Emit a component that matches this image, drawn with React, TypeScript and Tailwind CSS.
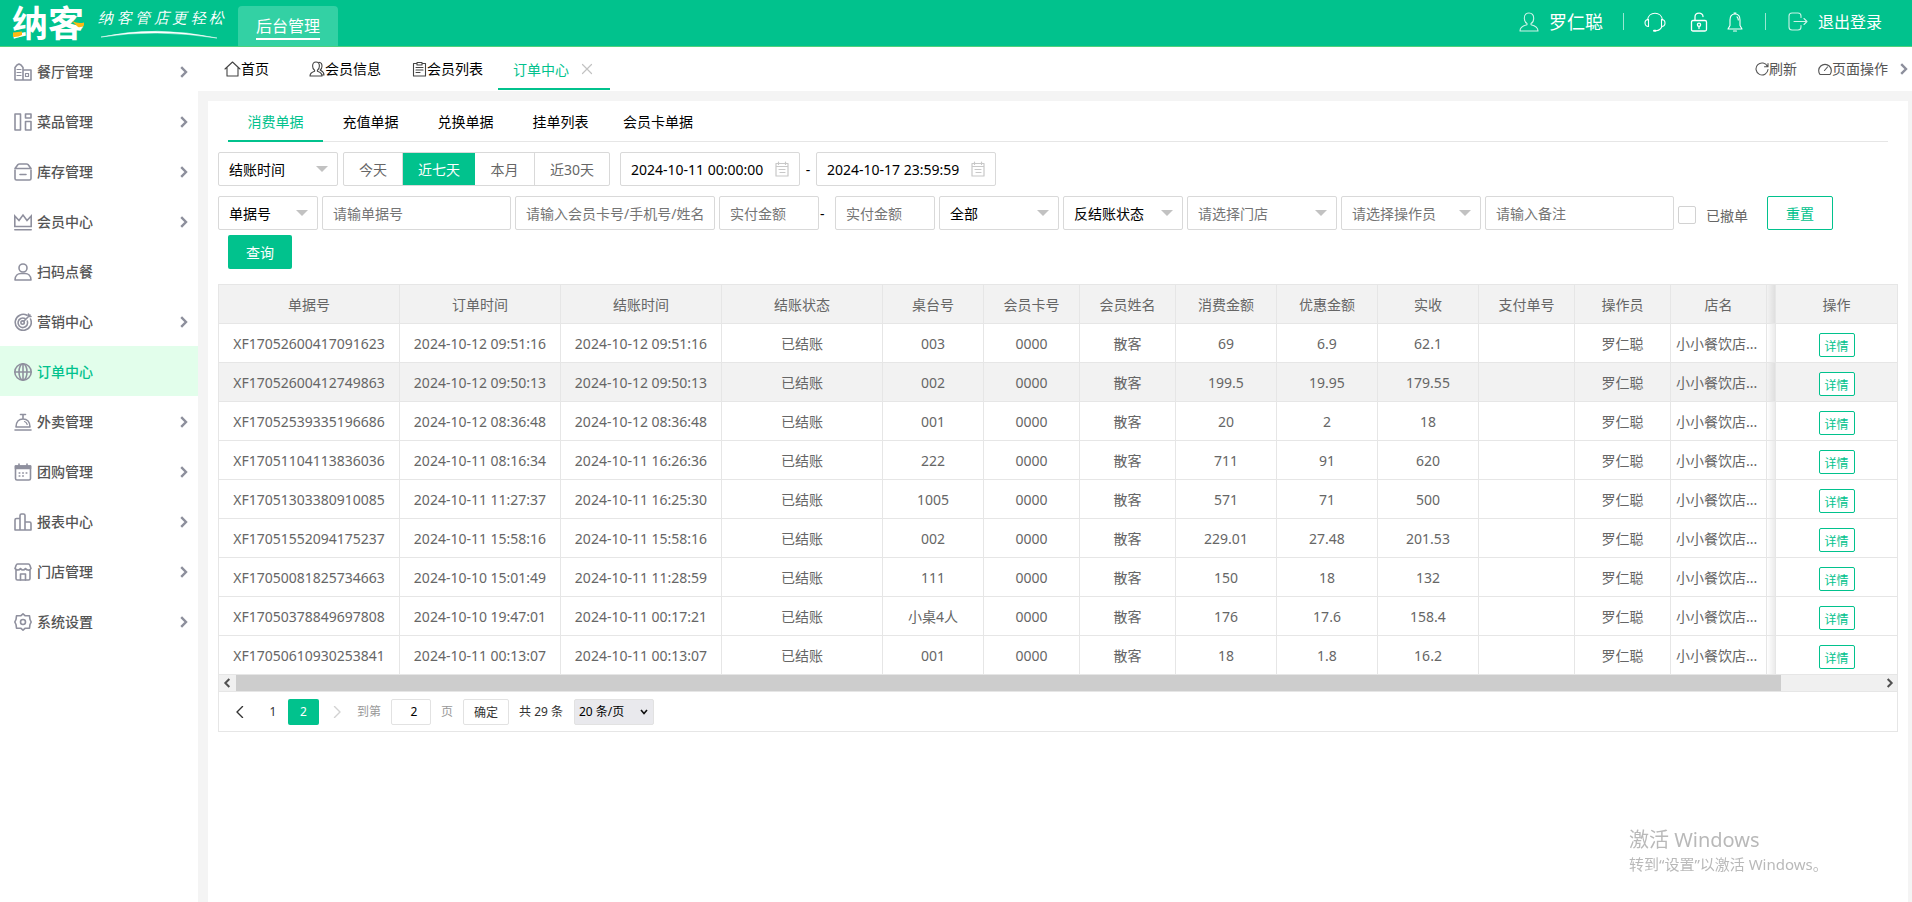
import type { ReactNode } from "react";

type IconProps = { className?: string; children: ReactNode; box?: string };

function Icon({ className = "", children, box = "0 0 18 18" }: IconProps) {
  return (
    <svg
      viewBox={box}
      className={className}
      fill="none"
      stroke="currentColor"
      strokeWidth="1.6"
      strokeLinejoin="round"
      strokeLinecap="round"
      aria-hidden="true"
    >
      {children}
    </svg>
  );
}

const menu: { label: string; arrow: boolean; active?: boolean; icon: ReactNode }[] = [
  {
    label: "餐厅管理",
    arrow: true,
    icon: (
      <>
        <path d="M1 17V4.500L3 2l2-1 2 1 2 2.500V17M1 17h16V7H9" />
        <path d="M3 6.500h4M3 9.500h4M3 12.500h4M11.500 10.500h3v3h-3z" strokeWidth="1.2" />
      </>
    ),
  },
  {
    label: "菜品管理",
    arrow: true,
    icon: <path d="M1 1h5.500v16H1zM11.500 1H17v4h-5.500zM11.500 8.500H17V17h-5.500z" />,
  },
  {
    label: "库存管理",
    arrow: true,
    icon: (
      <>
        <path d="M1 5.500 4 1.500Q4.500 1 5.500 1h7q1 0 1.500.500l3 4z" />
        <path d="M1 7v8.500Q1 17 2.500 17h13q1.500 0 1.500-1.500V7M6 11.500h6" />
      </>
    ),
  },
  {
    label: "会员中心",
    arrow: true,
    icon: <path d="M0.800 3v10.500h16.400V3l-4.200 4.500L9 2 5 7.500zM0.800 16.800h16.400" strokeLinejoin="miter" />,
  },
  {
    label: "扫码点餐",
    arrow: false,
    icon: (
      <>
        <circle cx="9" cy="5" r="4" />
        <path d="M1 17c0-4.500 3-6.500 6-6.500h4c3 0 6 2 6 6.500z" />
      </>
    ),
  },
  {
    label: "营销中心",
    arrow: true,
    icon: (
      <>
        <path d="M13 2.300A8 8 0 1 0 16.500 6" />
        <path d="M11 5.500A4.800 4.800 0 1 0 13.300 8" />
        <circle cx="8.600" cy="9.600" r="1.700" />
        <path d="M9.500 8.500 16 2M14.500 1v2.500H17" />
      </>
    ),
  },
  {
    label: "订单中心",
    arrow: false,
    active: true,
    icon: (
      <>
        <circle cx="9" cy="9" r="8.200" />
        <ellipse cx="9" cy="9" rx="4" ry="8.200" />
        <path d="M1 9h16M9 1v16" />
      </>
    ),
  },
  {
    label: "外卖管理",
    arrow: true,
    icon: (
      <>
        <path d="M2 14c0-5 3-8 7-8s7 3 7 8zM9 6V1.500M6.500 1.500h5M1 17h16" />
        <path d="M10.500 8.500c1.500.500 2.300 1.500 2.700 3" strokeWidth="1.200" />
      </>
    ),
  },
  {
    label: "团购管理",
    arrow: true,
    icon: (
      <>
        <path d="M1.500 3h15v12.500q0 1.500-1.500 1.500H3q-1.500 0-1.500-1.500z" />
        <path d="M1.500 3h15v2.500h-15z" fill="currentColor" />
        <path d="M5 1v2M13 1v2M5.200 10h.6M8.700 10h.6M12.200 10h.6M5.200 13h.6M8.700 13h.6" />
      </>
    ),
  },
  {
    label: "报表中心",
    arrow: true,
    icon: <path d="M1 17V7q0-1.500 1.500-1.500H6V2.500Q6 1 7.500 1h2Q11 1 11 2.500V17M6 5.500V17M11 9h4.500Q17 9 17 10.500V17H1" />,
  },
  {
    label: "门店管理",
    arrow: true,
    icon: (
      <>
        <path d="M2 7v8.500Q2 17 3.500 17h11q1.500 0 1.500-1.500V7M3.500 1h11q1 0 1.300 1L17 5.500Q16 7.500 14 7q-1.500 0-2.500-1.500Q10.500 7 9 7T6.500 5.500Q5.500 7 4 7 2 7 1 5.500L2.200 2q.3-1 1.300-1z" />
        <path d="M6.500 17v-6h5v6" />
      </>
    ),
  },
  {
    label: "系统设置",
    arrow: true,
    icon: (
      <>
        <path d="M9 .8 11.300 2.800h4.200L16 6.500 17.200 9 16 11.500l-.5 3.700h-4.200L9 17.200l-2.300-2H2.500L2 11.500.8 9 2 6.500l.5-3.700h4.200z" />
        <circle cx="9" cy="9" r="2.500" />
      </>
    ),
  },
];

const columns = [
  "单据号", "订单时间", "结账时间", "结账状态", "桌台号", "会员卡号", "会员姓名",
  "消费金额", "优惠金额", "实收", "支付单号", "操作员", "店名",
];

const rows: string[][] = [
  ["XF17052600417091623", "2024-10-12 09:51:16", "2024-10-12 09:51:16", "003", "69", "6.9", "62.1"],
  ["XF17052600412749863", "2024-10-12 09:50:13", "2024-10-12 09:50:13", "002", "199.5", "19.95", "179.55"],
  ["XF17052539335196686", "2024-10-12 08:36:48", "2024-10-12 08:36:48", "001", "20", "2", "18"],
  ["XF17051104113836036", "2024-10-11 08:16:34", "2024-10-11 16:26:36", "222", "711", "91", "620"],
  ["XF17051303380910085", "2024-10-11 11:27:37", "2024-10-11 16:25:30", "1005", "571", "71", "500"],
  ["XF17051552094175237", "2024-10-11 15:58:16", "2024-10-11 15:58:16", "002", "229.01", "27.48", "201.53"],
  ["XF17050081825734663", "2024-10-10 15:01:49", "2024-10-11 11:28:59", "111", "150", "18", "132"],
  ["XF17050378849697808", "2024-10-10 19:47:01", "2024-10-11 00:17:21", "小桌4人", "176", "17.6", "158.4"],
  ["XF17050610930253841", "2024-10-11 00:13:07", "2024-10-11 00:13:07", "001", "18", "1.8", "16.2"],
];

function Chevron({ className = "" }: { className?: string }) {
  return (
    <svg viewBox="0 0 8 12" className={className} fill="none" stroke="currentColor" strokeWidth="2.4" aria-hidden="true">
      <path d="m1.200 1.200 4.800 4.800-4.800 4.800" />
    </svg>
  );
}

function Header() {
  return (
    <header className="relative z-10 flex h-[46px] shrink-0 bg-[#01c28d] text-white shadow-[0_1px_0_#52d17c]">
      <div className="flex w-[238px] shrink-0 pl-3">
        <div className="relative h-full w-[73px]">
          <span className="text-[36px] leading-[48px] font-bold whitespace-nowrap">纳客</span>
          <svg viewBox="0 0 73 46" className="absolute inset-0 h-full w-full" fill="#fdb913" aria-hidden="true">
            <path d="M1 32.500 10 31.500V35Q6 37.500 1 37zM60 21Q66 24 72 22.500V25.500Q69 28 66 27z" />
          </svg>
        </div>
        <div className="ml-[13px] flex flex-col pt-[8px]">
          <p className="flex w-[126px] justify-between font-serif text-[15px] leading-5 italic">
            {"纳客管店更轻松".split("").map((c) => (
              <span key={c}>{c}</span>
            ))}
          </p>
          <svg viewBox="0 0 126 10" className="mt-[2px] h-[10px] w-[126px]" aria-hidden="true">
            <path d="M3 7Q58-5 119 8Q58-1.500 3 7z" fill="#fff" stroke="#fff" strokeWidth="0.500" />
          </svg>
        </div>
      </div>
      <a href="#admin" className="mt-[6px] flex h-10 w-[100px] justify-center rounded-t-[4px] bg-[#33d1a4] pt-[6px]">
        <span className="h-[28px] border-b-2 border-white text-[16px] leading-[28px]">后台管理</span>
      </a>
      <div className="ml-auto flex items-center pr-[30px] pb-[3px]">
        <a href="#user" className="flex items-center gap-[10px] text-[18px] leading-6">
          <Icon box="0 0 20 20" className="size-5 opacity-80">
            <path strokeWidth="1.100" d="M10 1C7 1 5.300 3.200 5.300 6.200c0 2.500 1 4.500 2.700 5.300v1.300C4 13.700 1 15.500 1 19h18c0-3.500-3-5.300-7-6.200v-1.300c1.700-.8 2.700-2.800 2.700-5.300C14.700 3.200 13 1 10 1z" />
          </Icon>
          罗仁聪
        </a>
        <i className="mx-5 h-[17px] w-px bg-white/60" />
        <button aria-label="客服" className="mr-6">
          <Icon box="0 0 22 20" className="h-5 w-[22px]">
            <path strokeWidth="1.100" d="M3.500 8C4 4 7 1.200 11 1.200S18 4 18.500 8M4.500 7.500v7C2.500 14.500 1 13 1 11s1.500-3.500 3.500-3.500zM17.500 7.500v7c2 0 3.500-1.500 3.500-3.500s-1.500-3.500-3.500-3.500zM18 14.500c-1 2.500-3 4-6 4.200" />
            <path strokeWidth="2" d="M10 18.800h1.500" />
          </Icon>
        </button>
        <button aria-label="锁屏" className="mr-[19px]">
          <Icon box="0 0 18 20" className="h-5 w-[18px]">
            <path strokeWidth="1.300" d="M3 8.500h12q1.500 0 1.500 1.500v7.500q0 1.500-1.500 1.500H3q-1.500 0-1.500-1.500V10q0-1.500 1.500-1.500zM5 8.500V5c0-5 8-5 8-.5M9 14.500v2" />
            <circle cx="9" cy="12.800" r="1.600" strokeWidth="1.300" />
          </Icon>
        </button>
        <button aria-label="消息">
          <Icon box="0 0 16 20" className="h-5 w-4">
            <path strokeWidth="1.100" d="M8 2C4.500 2 3 4.500 3 8v5.500L1 17h14l-2-3.500V8c0-3.500-1.500-6-5-6zM7 1h2M6.500 19h3M10 4.800Q11.300 6 11.300 8" />
          </Icon>
        </button>
        <i className="mx-[22px] h-[17px] w-px bg-white/60" />
        <a href="#logout" className="flex items-center gap-[10px] text-[16px] leading-6">
          <Icon box="0 0 20 20" className="size-5 opacity-80">
            <path strokeWidth="1.100" d="M13 5.500V4q0-3-3-3H4Q1 1 1 4v11q0 3 3 3h6q3 0 3-3v-1.500M6 9.500h13M16 6.500l3 3-3 3" />
          </Icon>
          退出登录
        </a>
      </div>
    </header>
  );
}

function Sidebar() {
  return (
    <nav className="w-[198px] shrink-0 bg-white">
      <ul>
        {menu.map((m) => (
          <li key={m.label}>
            <a
              href={"#" + m.label}
              className={
                m.active
                  ? "flex h-[50px] items-center bg-[#e2feeb] pt-[2px] pr-[10px] pl-[14px] text-[#01c28d]"
                  : "flex h-[50px] items-center pt-[2px] pr-[10px] pl-[14px] text-[#555]"
              }
            >
              <Icon className="size-[18px] shrink-0 text-[#8f909e]">{m.icon}</Icon>
              <span className="ml-[5px] text-[14px] leading-[18px] font-medium">{m.label}</span>
              {m.arrow && <Chevron className="ml-auto h-3 w-2 text-[#8d8f9c]" />}
            </a>
          </li>
        ))}
      </ul>
    </nav>
  );
}

function PageTabs() {
  return (
    <div className="flex h-[45px] shrink-0 items-center bg-white text-[14px] text-black">
      <a href="#home" className="ml-[26px] flex items-center">
        <Icon box="0 0 17 16" className="h-4 w-[17px] text-[#444]">
          <path strokeWidth="1.100" d="M1 8 8.500 1 16 8M3 6.500V15h11V6.500" />
        </Icon>
        首页
      </a>
      <a href="#member" className="ml-10 flex items-center">
        <Icon box="0 0 16 16" className="size-4 text-[#444]">
          <path strokeWidth="1.100" d="M7 1C4.800 1 3.600 2.600 3.600 5c0 2 .8 3.500 2 4.200v1C3 11 1 12 1 15h12c0-3-2-4-4.600-4.800v-1c1.200-.7 2-2.200 2-4.200 0-2.400-1.200-4-3.400-4zM10 1.200c2 .2 3 1.800 3 3.800s-.8 3.300-1.800 4c1 .8 3.800 1.500 3.800 5h-2" />
        </Icon>
        会员信息
      </a>
      <a href="#members" className="ml-[31px] flex items-center">
        <Icon box="0 0 15 16" className="h-4 w-[15px] text-[#444]">
          <path strokeWidth="1.100" d="M5 2.500H1.500V15h12V2.500H10M5 1.500h5v2.500H5zM4 6.500h7M4 9h7M4 11.500h4" />
        </Icon>
        会员列表
      </a>
      <div className="ml-[15px] flex h-[44px] w-[112px] items-center self-start border-b-2 border-[#01c28d] pt-1 pl-[15px] text-[#01c28d]">
        <a href="#orders">订单中心</a>
        <button aria-label="关闭" className="ml-3 text-[#c2c2c2]">
          <Icon box="0 0 12 12" className="size-3">
            <path strokeWidth="1.200" d="m1.500 1.500 9 9M10.500 1.500l-9 9" />
          </Icon>
        </button>
      </div>
      <div className="ml-auto flex items-center pr-1 text-[#555]">
        <button className="flex items-center">
          <Icon box="0 0 14 14" className="size-[14px]">
            <path strokeWidth="1.100" d="M12.500 4.500A6 6 0 1 0 13 7.500M13 1.500v3.200H9.500" />
          </Icon>
          刷新
        </button>
        <button className="ml-[21px] flex items-center">
          <Icon box="0 0 14 14" className="size-[14px]">
            <path strokeWidth="1.100" d="M2 12.500A6.300 6.300 0 1 1 12 12.500zM6.500 8.500 9.500 5" />
          </Icon>
          页面操作
        </button>
        <Chevron className="ml-3 h-3 w-2 text-[#8d8f9c]" />
      </div>
    </div>
  );
}

function Select({ label, value, className, muted = false }: { label: string; value: string; className: string; muted?: boolean }) {
  return (
    <div className={"relative " + className}>
      <select
        aria-label={label}
        className={
          muted
            ? "h-[34px] w-full appearance-none rounded-[2px] border border-[#d9d9d9] bg-white pl-[10px] text-[14px] text-[#757575]"
            : "h-[34px] w-full appearance-none rounded-[2px] border border-[#d9d9d9] bg-white pl-[10px] text-[14px] text-black"
        }
      >
        <option>{value}</option>
      </select>
      <svg viewBox="0 0 12 6" className="pointer-events-none absolute top-[14px] right-[10px] h-[6px] w-3" fill="#c2c2c2" aria-hidden="true">
        <path d="M0 0h12L6 6z" />
      </svg>
    </div>
  );
}

function TextBox({ hint, className }: { hint: string; className: string }) {
  return (
    <input
      type="text"
      aria-label={hint}
      placeholder={hint}
      className={"h-[34px] rounded-[2px] border border-[#d9d9d9] bg-white pl-[10px] text-[14px] text-black placeholder:text-[#757575] " + className}
    />
  );
}

function DateBox({ label, value }: { label: string; value: string }) {
  return (
    <div className="flex h-[34px] w-[180px] items-center rounded-[2px] border border-[#d9d9d9] pr-[10px] pl-[10px]">
      <input type="text" aria-label={label} defaultValue={value} className="w-0 grow text-[14px] text-black outline-none" />
      <Icon box="0 0 14 16" className="h-4 w-[14px] text-[#c8c8c8]">
        <path strokeWidth="1.200" d="M1 2.500h12V15H1zM1 5.500h12M3.500 1v2.500M10.500 1v2.500M4 8.500h6M5 11.500h5" />
      </Icon>
    </div>
  );
}

function Filters() {
  return (
    <form className="px-[10px] pt-[10px]" onSubmit={(e) => e.preventDefault()}>
      <div className="flex flex-wrap items-center">
        <Select label="时间类型" value="结账时间" className="w-[120px]" />
        <div className="ml-[5px] flex h-[34px] overflow-hidden rounded-[2px] border border-[#d9d9d9] text-[14px] text-[#666]">
          <button className="w-[59px] border-r border-[#d9d9d9]">今天</button>
          <button className="w-[72px] bg-[#01c28d] text-white">近七天</button>
          <button className="w-[60px] border-r border-[#d9d9d9]">本月</button>
          <button className="w-[74px]">近30天</button>
        </div>
        <div className="ml-[10px] flex items-center text-[14px] text-black">
          <DateBox label="开始时间" value="2024-10-11 00:00:00" />
          <span className="w-4 text-center">-</span>
          <DateBox label="结束时间" value="2024-10-17 23:59:59" />
        </div>
      </div>
      <div className="mt-[10px] flex flex-wrap items-center gap-x-1 gap-y-[5px]">
        <Select label="单据类型" value="单据号" className="w-[100px]" />
        <TextBox hint="请输单据号" className="w-[189px]" />
        <TextBox hint="请输入会员卡号/手机号/姓名" className="w-[200px]" />
        <div className="flex items-center text-[14px] text-black">
          <TextBox hint="实付金额" className="w-[100px]" />
          <span className="w-4 pl-[1px]">-</span>
          <TextBox hint="实付金额" className="w-[100px]" />
        </div>
        <Select label="支付方式" value="全部" className="w-[120px]" />
        <Select label="反结账状态" value="反结账状态" className="w-[120px]" />
        <Select label="门店" value="请选择门店" className="w-[150px]" muted />
        <Select label="操作员" value="请选择操作员" className="w-[140px]" muted />
        <TextBox hint="请输入备注" className="w-[189px]" />
        <label className="flex items-center pt-[4px] text-[14px] text-[#666]">
          <input type="checkbox" className="mr-[10px] size-[18px] appearance-none rounded-[2px] border border-[#d2d2d2] bg-white" />
          已撤单
        </label>
        <button className="ml-[15px] h-[34px] w-[66px] rounded-[2px] border border-[#01c28d] text-[14px] text-[#01c28d]">重置</button>
      </div>
      <button className="mt-[5px] ml-[10px] block h-[34px] w-16 rounded-[2px] bg-[#01c28d] text-[14px] text-white">查询</button>
    </form>
  );
}

const cell = "h-[39px] border-r border-b border-[#e6e6e6] px-0 pt-[2px] pb-0 text-center font-normal whitespace-nowrap";
const shade = "border-r border-b border-[#e6e6e6] bg-linear-to-r from-black/0 to-black/8 p-0";

function Orders() {
  return (
    <section className="mx-[10px] mt-[15px] border border-[#e6e6e6]">
      <table className="w-full table-fixed border-separate border-spacing-0 text-[14px] leading-5 text-[#666]">
        <colgroup>
          <col className="w-[181px]" />
          <col className="w-[161px]" />
          <col className="w-[161px]" />
          <col className="w-[161px]" />
          <col className="w-[101px]" />
          <col className="w-[96px]" />
          <col className="w-[96px]" />
          <col className="w-[101px]" />
          <col className="w-[101px]" />
          <col className="w-[101px]" />
          <col className="w-[96px]" />
          <col className="w-[96px]" />
          <col className="w-[96px]" />
          <col />
          <col className="w-[121px]" />
        </colgroup>
        <thead>
          <tr className="bg-[#f2f2f2]">
            {columns.map((c) => (
              <th key={c} className={cell}>{c}</th>
            ))}
            <th className={shade} />
            <th className="h-[39px] border-b border-[#e6e6e6] px-0 pt-[2px] pb-0 font-normal">操作</th>
          </tr>
        </thead>
        <tbody>
          {rows.map((r, i) => (
            <tr key={r[0]} className={i === 1 ? "bg-[#f2f2f2]" : "bg-white"}>
              <td className={cell}>{r[0]}</td>
              <td className={cell}>{r[1]}</td>
              <td className={cell}>{r[2]}</td>
              <td className={cell}>已结账</td>
              <td className={cell}>{r[3]}</td>
              <td className={cell}>0000</td>
              <td className={cell}>散客</td>
              <td className={cell}>{r[4]}</td>
              <td className={cell}>{r[5]}</td>
              <td className={cell}>{r[6]}</td>
              <td className={cell} />
              <td className={cell}>罗仁聪</td>
              <td className="h-[39px] border-r border-b border-[#e6e6e6] pt-[2px] pr-0 pb-0 pl-[5px] text-left whitespace-nowrap">小小餐饮店...</td>
              <td className={shade} />
              <td className="h-[39px] border-b border-[#e6e6e6] p-0 text-center">
                <button className="mx-auto mt-1 flex h-6 w-9 items-center justify-center rounded-[2px] border border-[#01c28d] bg-white pt-[3px] text-[12px] leading-4 text-[#01c28d]">
                  详情
                </button>
              </td>
            </tr>
          ))}
        </tbody>
      </table>
      <div className="flex h-[17px] items-center border-b border-[#e6e6e6] bg-[#f0f0f0] text-[#505050]">
        <Chevron className="mr-[5px] ml-1 h-[10px] w-2 rotate-180" />
        <div className="h-full w-[92.1%] bg-[#cdcdcd]" />
        <Chevron className="mr-[3px] ml-auto h-[10px] w-2" />
      </div>
      <div className="flex h-[39px] items-center pl-[15px] text-[12px] text-[#333]">
        <button aria-label="上一页" className="w-3">
          <Icon box="0 0 12 12" className="size-3">
            <path strokeWidth="1.400" d="M8.500.500 3 6l5.500 5.500" />
          </Icon>
        </button>
        <button className="ml-[14px] w-[26px]">1</button>
        <button className="ml-[2px] h-[26px] w-[31px] rounded-[2px] bg-[#01c28d] text-white">2</button>
        <button aria-label="下一页" className="ml-3 w-3 text-[#d2d2d2]">
          <Icon box="0 0 12 12" className="size-3">
            <path strokeWidth="1.400" d="M3.500.500 9 6l-5.500 5.500" />
          </Icon>
        </button>
        <label className="ml-[14px] flex items-center text-[#999]">
          到第
          <input type="text" defaultValue="2" className="mx-[10px] h-[26px] w-10 rounded-[2px] border border-[#e2e2e2] pl-[6px] text-center text-black" />
          页
        </label>
        <button className="ml-[10px] h-[26px] w-[46px] rounded-[2px] border border-[#e2e2e2] pt-[2px]">确定</button>
        <span className="ml-[10px]">共 29 条</span>
        <div className="relative ml-[11px] text-black">
          <select aria-label="每页条数" className="h-[26px] w-20 appearance-none rounded-[2px] border border-[#e2e2e2] bg-[#e9e9ed] pl-1">
            <option>20 条/页</option>
          </select>
          <svg viewBox="0 0 8 6" className="pointer-events-none absolute top-[10px] right-[6px] h-[6px] w-2" fill="none" stroke="#111" strokeWidth="1.600" aria-hidden="true">
            <path d="m1 1 3 3.500L7 1" />
          </svg>
        </div>
      </div>
    </section>
  );
}

function Panel() {
  const tabs = ["消费单据", "充值单据", "兑换单据", "挂单列表"];
  return (
    <main className="mt-[10px] mr-1 ml-[10px] grow bg-white">
      <div className="mx-5 flex h-[41px] border-b border-[#e6e6e6] text-[14px] text-black">
        {tabs.map((t, i) => (
          <a
            key={t}
            href={"#" + t}
            className={
              i === 0
                ? "flex h-[41px] w-[95px] items-center justify-center border-b-2 border-[#01c28d] pt-[2px] text-[#01c28d]"
                : "flex h-[41px] w-[95px] items-center justify-center"
            }
          >
            {t}
          </a>
        ))}
        <a href="#card" className="flex h-[41px] items-center px-[15px]">会员卡单据</a>
      </div>
      <Filters />
      <Orders />
    </main>
  );
}

export default function App() {
  return (
    <div className="flex min-h-screen flex-col bg-[#f4f4f4] font-['Noto_Sans','Noto_Sans_CJK_SC',sans-serif]">
      <Header />
      <div className="flex grow">
        <Sidebar />
        <div className="flex min-w-0 grow flex-col">
          <PageTabs />
          <Panel />
        </div>
      </div>
      <aside className="pointer-events-none fixed right-[84px] bottom-[28px] w-[199px] text-[#b9b9b9]">
        <p className="text-[20px] leading-7">激活 Windows</p>
        <p className="text-[15px] leading-5 whitespace-nowrap">转到“设置”以激活 Windows。</p>
      </aside>
    </div>
  );
}
